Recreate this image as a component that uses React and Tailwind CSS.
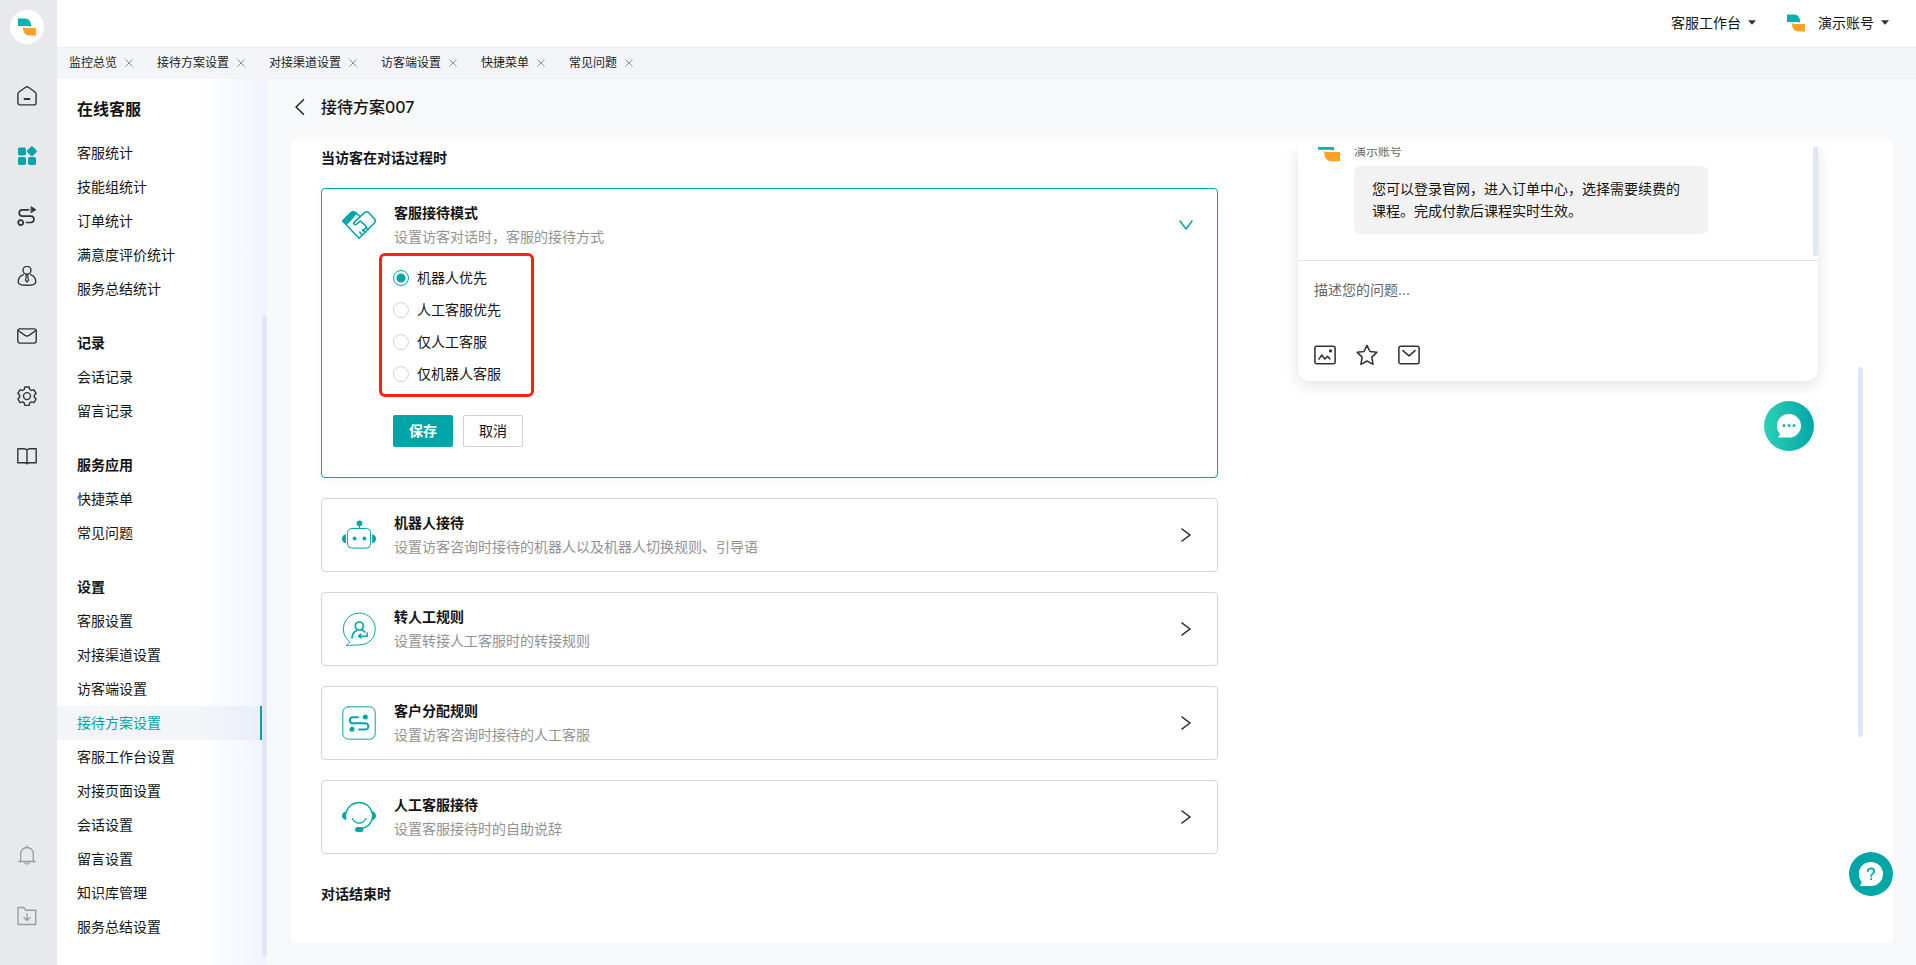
import { useState } from "react";

const navGroups = [
  { title: null, items: ["客服统计", "技能组统计", "订单统计", "满意度评价统计", "服务总结统计"] },
  { title: "记录", items: ["会话记录", "留言记录"] },
  { title: "服务应用", items: ["快捷菜单", "常见问题"] },
  {
    title: "设置",
    items: [
      "客服设置",
      "对接渠道设置",
      "访客端设置",
      "接待方案设置",
      "客服工作台设置",
      "对接页面设置",
      "会话设置",
      "留言设置",
      "知识库管理",
      "服务总结设置",
    ],
  },
];

const tabs = ["监控总览", "接待方案设置", "对接渠道设置", "访客端设置", "快捷菜单", "常见问题"];
const modes = ["机器人优先", "人工客服优先", "仅人工客服", "仅机器人客服"];

function Logo({ size = 18 }) {
  return (
    <svg width={size} height={size} viewBox="0 0 18 18" aria-hidden="true">
      <path d="M0 .6h7c4 0 6.200 3 6.200 8.200C12 8.100 11 7.900 9 7.900H0z" fill="#00b2b0" />
      <path d="M5 8.900c1.200.9 2.200 1 4 1h9v7.500h-6.500C7.300 17.400 5 14.200 5 8.900z" fill="#ffa126" />
    </svg>
  );
}

function Line({ size = 20, width = 1.4, className = "", children }) {
  return (
    <svg
      width={size}
      height={size}
      viewBox="0 0 20 20"
      fill="none"
      stroke="currentColor"
      strokeWidth={width}
      strokeLinecap="round"
      strokeLinejoin="round"
      className={className}
      aria-hidden="true"
    >
      {children}
    </svg>
  );
}

const railIcons = [
  {
    label: "首页",
    icon: (
      <Line>
        <path d="M.9 8.200c0-1 .3-1.600 1.100-2.200L8.600 1.300c.9-.7 1.900-.7 2.800 0L18 6c.8.600 1.100 1.200 1.100 2.200v8.600c0 1.300-.8 2.100-2.100 2.100H3c-1.300 0-2.100-.8-2.100-2.100z" />
        <path d="M7.500 13h5" strokeWidth="1.800" />
      </Line>
    ),
  },
  {
    label: "应用",
    active: true,
    icon: (
      <svg width="20" height="20" viewBox="0 0 20 20" fill="currentColor" aria-hidden="true">
        <rect x="1" y="1.500" width="8" height="8" rx="1.800" />
        <rect x="1" y="11" width="8" height="8" rx="1.800" />
        <rect x="11" y="11" width="8" height="8" rx="1.800" />
        <rect x="11" y="1.400" width="7.800" height="7.800" rx="1.400" transform="rotate(45 14.900 5.300)" />
      </svg>
    ),
  },
  {
    label: "流程",
    icon: (
      <Line width={1.7}>
        <path d="M11.500 3.800H5.400a3.200 3.200 0 0 0 0 6.400h8.400a3.100 3.100 0 0 1 0 6.300H9.500" />
        <circle cx="3.700" cy="16.600" r="2.500" />
        <path d="M14.300.8l4.700 2.900-4.700 2.900z" fill="currentColor" strokeWidth=".8" />
      </Line>
    ),
  },
  {
    label: "客户",
    icon: (
      <Line>
        <circle cx="10" cy="4.300" r="4" />
        <path d="M6.400 8.600C3.200 9.800 1.200 12.800 1.200 16c0 2 3.400 3.300 8.800 3.300s8.800-1.300 8.800-3.300c0-3.200-2-6.200-5.200-7.400" />
        <path d="M8.900 8.800h2.200l-.4 2 .9 3.300L10 16l-1.600-1.900.9-3.300z" strokeWidth="1.200" />
      </Line>
    ),
  },
  {
    label: "邮件",
    icon: (
      <Line>
        <rect x=".8" y="2.900" width="18.400" height="14.200" rx="2" />
        <path d="M1.500 4.800 8 9.400c1.500 1 2.500 1 4 0l6.500-4.600" />
      </Line>
    ),
  },
  {
    label: "系统设置",
    icon: (
      <Line>
        <path d="M7.900 1h4.200l.7 2.500 1.700 1 2.500-.7 2.100 3.600-1.800 1.800v2l1.800 1.800-2.100 3.600-2.500-.7-1.700 1-.7 2.500H7.900l-.7-2.500-1.700-1-2.500.7L.9 13l1.800-1.800v-2L.9 7.400 3 3.800l2.500.7 1.700-1z" />
        <circle cx="10" cy="10.100" r="3.500" />
      </Line>
    ),
  },
  {
    label: "知识库",
    icon: (
      <Line>
        <path d="M10 4c-.8-1-1.600-1.300-3-1.300H.8v14h6.700c1.300 0 2 .3 2.500 1.100.5-.8 1.200-1.100 2.500-1.100h6.700v-14H13c-1.400 0-2.200.3-3 1.300zM10 4v13.500" />
      </Line>
    ),
  },
];

function Rail() {
  return (
    <nav aria-label="主导航" className="flex w-[57px] shrink-0 flex-col items-center bg-[#e8e9ed] pt-[10px] pr-[3px] pb-[39px] text-[#333336]">
      <a href="#home" aria-label="演示账号" className="mb-[42px] flex size-[34px] items-center justify-center rounded-full bg-white">
        <Logo />
      </a>
      <div className="flex flex-col gap-10">
        {railIcons.map((r) => (
          <button key={r.label} type="button" aria-label={r.label} className={r.active ? "text-[#00a6a7]" : ""}>
            {r.icon}
          </button>
        ))}
      </div>
      <div className="mt-auto flex flex-col gap-[41px] text-[#9c9da1]">
        <button type="button" aria-label="通知">
          <Line>
            <path d="M1.800 16.500h16.400M3.700 16.300V8.800a6.300 6.300 0 0 1 12.600 0v7.500M10 2.300V.8M7.600 17.200c.3 1.200 1.200 1.900 2.400 1.900s2.100-.7 2.400-1.900" />
          </Line>
        </button>
        <button type="button" aria-label="下载">
          <Line>
            <path d="M1 1.500h5.800l1.900 2.700h10v14.300H1zM10 7.800v6.400M6.900 11.400 10 14.400l3.100-3" />
          </Line>
        </button>
      </div>
    </nav>
  );
}

function Caret() {
  return (
    <svg width="8" height="5" viewBox="0 0 8 5" aria-hidden="true">
      <path d="M0 .3h8L4.500 4.200a.7.700 0 0 1-1 0z" fill="#333" />
    </svg>
  );
}

function Header() {
  return (
    <header className="flex h-12 shrink-0 items-center justify-end gap-[31px] border-b border-[#ebecf7] bg-white pr-[27px] pb-[2px] text-sm">
      <button type="button" className="flex items-center gap-[7px]">
        客服工作台
        <Caret />
      </button>
      <button type="button" className="flex items-center gap-[7px]">
        <Logo />
        <span className="pl-[6px]">演示账号</span>
        <Caret />
      </button>
    </header>
  );
}

function TabBar() {
  return (
    <div className="flex h-[31px] shrink-0 items-center gap-6 bg-[#f4f5f8] pb-[2px] pl-3 text-xs text-[#222]">
      {tabs.map((t) => (
        <div key={t} className="flex items-center gap-2">
          <a href="#tab">{t}</a>
          <button type="button" aria-label={"关闭" + t} className="text-[#8f8f94]">
            <svg width="8" height="8" viewBox="0 0 8 8" stroke="currentColor" strokeWidth="1" fill="none" aria-hidden="true">
              <path d="M.3.300l7.400 7.400M7.700.3.300 7.700" />
            </svg>
          </button>
        </div>
      ))}
    </div>
  );
}

function Sidebar() {
  return (
    <aside className="relative w-[210px] shrink-0 bg-linear-to-r from-white from-68% to-[#f0f4ff] pt-3 text-sm">
      <h2 className="flex h-9 items-center pl-5 text-base font-bold">在线客服</h2>
      <div className="mt-[9px] flex flex-col gap-5 pr-[5px]">
        {navGroups.map((g, i) => (
          <div key={i}>
            {g.title && <h3 className="flex h-[34px] items-center pl-5 font-bold">{g.title}</h3>}
            <ul>
              {g.items.map((item) => (
                <li key={item}>
                  <a
                    href="#nav"
                    className={
                      item === "接待方案设置"
                        ? "flex h-[34px] items-center border-r-2 border-[#00a6a7] bg-[#dee3ec]/35 pl-5 text-[#00a6a7]"
                        : "flex h-[34px] items-center pl-5"
                    }
                  >
                    {item}
                  </a>
                </li>
              ))}
            </ul>
          </div>
        ))}
      </div>
      <div className="absolute top-[236px] right-0 bottom-2 w-[5px] rounded-full bg-[#e0e6f4]" />
    </aside>
  );
}

function CardIcon({ children }) {
  return (
    <svg width="34" height="34" viewBox="0 0 34 34" fill="none" stroke="#00a6a7" strokeLinecap="round" strokeLinejoin="round" className="shrink-0" aria-hidden="true">
      {children}
    </svg>
  );
}

const handshake = (
  <CardIcon>
    <path d="M.9 12 9 4.200c1.300-1.200 3.400-1 4.400.1l1.200 1.300L5.800 15.600 4.500 16.500.9 14.300c-.6-.7-.6-1.600 0-2.300z" fill="#00a6a7" />
    <path d="M3.500 16 17 30.300 32.400 15c1.100-1.200 1.100-3 0-4.200L26.800 4.700c-1.300-1.300-3-1.300-4.300 0L12 14.400c-1 1.100.8 3 2.300 1.900l4-3.300 5.200 4.700c.9.900.8 1.800-.1 2.700l-2.600 2.400M13.400 4.300l4.400 4.200" strokeWidth="1.600" />
    <path d="m17.600 24 2.400 3m.8-5.500 2.400 3m.5-5.500 2.600 2.600" strokeWidth="1.500" />
  </CardIcon>
);

const robot = (
  <CardIcon>
    <rect x="5.600" y="10.500" width="23" height="19.600" rx="4" strokeWidth="1" />
    <circle cx="17.500" cy="5.300" r="2.900" fill="#00a6a7" stroke="none" />
    <path d="M17.500 7v3.500" strokeWidth="1.300" />
    <circle cx="12.600" cy="20.500" r="1.900" fill="#00a6a7" stroke="none" />
    <circle cx="22.400" cy="20.500" r="1.900" fill="#00a6a7" stroke="none" />
    <path d="M4 16.500c-2.400 0-4 1.800-4 4.200s1.600 4.200 4 4.200zM30.200 16.500c2.400 0 3.800 1.800 3.800 4.200s-1.400 4.200-3.800 4.200z" fill="#00a6a7" stroke="none" />
  </CardIcon>
);

const transfer = (
  <CardIcon>
    <path d="M4.500 33.300c1.500-.8 2.600-2 3.200-3.500A16 16 0 0 1 17.300 1C26 1 33.200 8 33.200 16.600c0 9-6 16.300-15.500 16.300-4 0-9 .6-13.200.4z" strokeWidth="1" />
    <circle cx="17.300" cy="14" r="4" strokeWidth="1.700" />
    <path d="M10 26c0-3.600 1.700-6.200 4.600-7.600M19.800 17.800c1.300.6 2.200 1.300 3 2.200" strokeWidth="1.700" />
    <path d="M25.200 21v3.200h-8.500m2.300-2-2.500 2 2.500 1.800" strokeWidth="1.500" />
  </CardIcon>
);

const route = (
  <CardIcon>
    <rect x=".8" y=".8" width="32.400" height="32.400" rx="5.500" strokeWidth="1" />
    <path d="M16 11.300h-5.200a2.900 2.900 0 0 0 0 5.900h12.400a3.200 3.200 0 0 1 0 6.400h-6" strokeWidth="2" />
    <circle cx="23.300" cy="11" r="2.500" fill="#00a6a7" stroke="none" />
    <circle cx="10" cy="23.300" r="2.500" fill="#00a6a7" stroke="none" />
  </CardIcon>
);

const headset = (
  <CardIcon>
    <path d="M4 13.500a13.300 13.300 0 0 1 26.200 0M30.500 18.500c-1.500 5-5.500 9.500-12 10.200" strokeWidth="1.300" />
    <path d="M10.300 18.500c1.600 3.200 4 4.700 6.800 4.700s5.200-1.500 6.800-4.700" strokeWidth="1.200" />
    <path d="M3.800 11.500C1.500 12 0 13.500 0 15.700s1.500 3.900 4.500 4.300zM30.200 11c2.400.8 3.800 2.500 3.800 4.700s-1.500 4-4.500 4.800z" fill="#00a6a7" stroke="none" />
    <rect x="13" y="27" width="8.500" height="5" rx="2.500" fill="#00a6a7" stroke="none" />
  </CardIcon>
);

const cards = [
  { icon: robot, title: "机器人接待", desc: "设置访客咨询时接待的机器人以及机器人切换规则、引导语" },
  { icon: transfer, title: "转人工规则", desc: "设置转接人工客服时的转接规则" },
  { icon: route, title: "客户分配规则", desc: "设置访客咨询时接待的人工客服" },
  { icon: headset, title: "人工客服接待", desc: "设置客服接待时的自助说辞" },
];

function CardHead({ icon, title, desc, open }) {
  return (
    <button type="button" aria-expanded={!!open} className="flex h-[72px] w-full items-center gap-[18px] pr-[25px] pl-5 text-left">
      {icon}
      <span className="flex flex-1 flex-col text-sm leading-6">
        <span className="font-bold">{title}</span>
        <span className="text-[#929296]">{desc}</span>
      </span>
      <svg
        width="12"
        height="14"
        viewBox="0 0 12 14"
        fill="none"
        stroke="currentColor"
        strokeWidth="1.500"
        strokeLinecap="round"
        strokeLinejoin="round"
        className={open ? "rotate-90 text-[#00a6a7]" : "text-[#222]"}
        aria-hidden="true"
      >
        <path d="m2 1 8 6-8 6" />
      </svg>
    </button>
  );
}

function ModeCard() {
  const [mode, setMode] = useState(modes[0]);
  return (
    <section className="rounded-sm border border-[#00a6a7] pb-[30px] shadow-[0_2px_12px_rgba(0,166,167,0.08)]">
      <CardHead icon={handshake} title="客服接待模式" desc="设置访客对话时，客服的接待方式" open />
      <div className="pl-[57px]">
        <fieldset className="-mt-2 flex h-36 w-[155px] flex-col justify-center gap-2 rounded-md border-3 border-[#ff2010] pt-[2px] pl-[11px] text-sm">
          {modes.map((m) => (
            <label key={m} className="flex h-6 items-center gap-2">
              <input
                type="radio"
                name="mode"
                checked={mode === m}
                onChange={() => setMode(m)}
                className="size-4 appearance-none rounded-full border border-[#d4d4d6] bg-white checked:border-[#00a6a7] checked:bg-[radial-gradient(circle,#00a6a7_4px,white_5px)]"
              />
              {m}
            </label>
          ))}
        </fieldset>
        <div className="mt-[18px] flex gap-[10px] pl-[14px] text-sm">
          <button type="button" className="h-8 w-[60px] rounded-xs bg-[#00a6a7] font-bold text-white">
            保存
          </button>
          <button type="button" className="h-8 w-[60px] rounded-xs border border-[#d0d0d3] bg-white">
            取消
          </button>
        </div>
      </div>
    </section>
  );
}

function ChatPreview() {
  return (
    <aside className="-mx-5 flex flex-col overflow-hidden px-5">
      <div className="w-[520px] rounded-b-xl bg-white shadow-[0_4px_16px_rgba(0,0,0,0.12)]">
        <div className="relative -mt-2 flex h-[122px] gap-[14px] border-b border-[#dfdfe0] pl-5">
          <div className="pt-[1px]">
            <Logo size={22} />
          </div>
          <div className="flex flex-col">
            <div className="h-[27px] pt-1 text-xs leading-[18px] text-[#666]">演示账号</div>
            <p className="w-[354px] rounded-md bg-[#f2f2f2] px-[18px] py-3 text-sm leading-[22px]">
              您可以登录官网，进入订单中心，选择需要续费的课程。完成付款后课程实时生效。
            </p>
          </div>
          <div className="absolute top-0 right-0 bottom-1 w-[5px] rounded-full bg-[#e0e6f4]" />
        </div>
        <textarea
          aria-label="描述您的问题"
          placeholder="描述您的问题..."
          className="block h-20 w-full resize-none px-4 pt-[18px] text-sm leading-[22px] placeholder:text-[#666] focus:outline-none"
        />
        <div className="flex gap-5 px-4 pt-[3px] pb-[15px] text-[#333]">
          <button type="button" aria-label="图片">
            <Line size={22} width={1.4}>
              <rect x="0.800" y="2" width="18.400" height="16" rx="1.800" />
              <path d="m4.500 13.800 2.600-3.800 2.700 3.600 2.500-2.400 2.200 2.400" />
              <circle cx="15" cy="6.300" r=".8" fill="currentColor" />
            </Line>
          </button>
          <button type="button" aria-label="收藏">
            <Line size={22} width={1.4}>
              <path d="m10 1.200 2.700 5.600 6.200.8-4.500 4.300 1.100 6.600L10 15.500 4.500 18.500l1.100-6.600-4.500-4.300 6.200-.8z" />
            </Line>
          </button>
          <button type="button" aria-label="留言">
            <Line size={22} width={1.4}>
              <rect x="0.800" y="2" width="18.400" height="16" rx="1.800" />
              <path d="m4.500 6 5.500 4.800L15.500 6" />
            </Line>
          </button>
        </div>
      </div>
      <button
        type="button"
        aria-label="在线咨询"
        className="mt-5 mr-1 flex size-[50px] items-center justify-center self-end rounded-full bg-linear-to-r from-[#2bd0b4] to-[#00a6a7]"
      >
        <svg width="24" height="24" viewBox="0 0 24 24" aria-hidden="true">
          <path d="M12 0a12 11.800 0 0 1 0 23.600H2c-.8 0-1-.6-.5-1.100l1.200-1.700c.4-.7.200-1.200-.3-1.800A12 11.800 0 0 1 12 0z" fill="#fff" />
          <g fill="#10b9ad">
            <circle cx="7" cy="11.600" r="1.500" />
            <circle cx="12" cy="11.600" r="1.500" />
            <circle cx="17" cy="11.600" r="1.500" />
          </g>
        </svg>
      </button>
    </aside>
  );
}

export default function App() {
  return (
    <div className="flex min-h-screen bg-[#f8f9fb] font-['Inter','Noto_Sans_CJK_SC',sans-serif] text-[#141414]">
      <Rail />
      <div className="flex min-w-0 flex-1 flex-col">
        <Header />
        <TabBar />
        <div className="flex flex-1">
          <Sidebar />
          <main className="flex min-w-0 flex-1 flex-col pr-[23px] pb-[23px] pl-6">
            <div className="flex h-[60px] items-center gap-4 pb-1 pl-1">
              <button type="button" aria-label="返回">
                <svg width="10" height="16" viewBox="0 0 10 16" fill="none" stroke="#222" strokeWidth="1.500" strokeLinecap="round" strokeLinejoin="round" aria-hidden="true">
                  <path d="M8.500.8 1 8l7.500 7.200" />
                </svg>
              </button>
              <h1 className="text-base font-medium">接待方案007</h1>
            </div>
            <div className="flex flex-1 items-start bg-white px-[30px] pt-2">
              <div className="flex min-w-0 flex-1 flex-col gap-5">
                <h2 className="pt-[1px] text-sm leading-5 font-bold">当访客在对话过程时</h2>
                <ModeCard />
                {cards.map((c) => (
                  <section key={c.title} className="rounded-sm border border-[#d6d6d8]">
                    <CardHead {...c} />
                  </section>
                ))}
                <h2 className="pt-[10px] text-sm leading-5 font-bold">对话结束时</h2>
              </div>
              <div className="ml-20 flex shrink-0 gap-10">
                <ChatPreview />
                <div className="mt-[220px] h-[370px] w-[5px] rounded-full bg-[#e0e6f4]" />
              </div>
            </div>
          </main>
        </div>
      </div>
      <button
        type="button"
        aria-label="帮助"
        className="fixed right-[23px] bottom-[69px] flex size-11 items-center justify-center rounded-full bg-[#00a6a7]"
      >
        <svg width="24" height="24" viewBox="0 0 24 24" aria-hidden="true">
          <path d="M12 0a12 12 0 0 1 0 24H1.800c-.8 0-1-.6-.5-1.100l1.200-1.900c.4-.7.200-1.200-.3-1.800A12 12 0 0 1 12 0z" fill="#fff" />
          <path d="M8.800 9.300c0-1.900 1.400-3 3.200-3s3.300 1.200 3.300 2.900c0 2.400-3.200 2.600-3.200 5.200" fill="none" stroke="#00a6a7" strokeWidth="1.700" strokeLinecap="round" />
          <circle cx="12.100" cy="17.200" r="1.100" fill="#00a6a7" />
        </svg>
      </button>
    </div>
  );
}
